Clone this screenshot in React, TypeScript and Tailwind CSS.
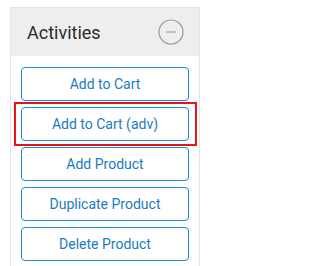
const ACTIONS = ["Add to Cart", "Add to Cart (adv)", "Add Product", "Duplicate Product", "Delete Product"]

export default function App() {
  return (
    <div className="h-[266px] w-[206px] overflow-hidden bg-white pt-[7px] pl-[10px] font-['Roboto',sans-serif]">
      <div className="h-[300px] w-[190px] border border-b-0 border-[#e4e4e4]">
        <div className="flex h-[48px] items-center justify-between bg-[#eeeeee] pl-[16px] pr-[15px]">
          <span className="text-[18px] text-[#2b2b2b]">Activities</span>
          <svg width="26" height="26" viewBox="0 0 26 26">
            <circle cx="13" cy="13" r="12" fill="none" stroke="#9a9a9a" strokeWidth="1.2" />
            <line x1="8" y1="13" x2="18" y2="13" stroke="#b0b0b0" strokeWidth="1.5" />
          </svg>
        </div>
        <div className="flex flex-col gap-[6px] px-[10px] pt-[11px]">
          {ACTIONS.map((label, i) => (
            <div key={label} className="relative">
              {i === 1 && (
                <div className="absolute -top-[5px] -bottom-[5px] -left-[7px] -right-[8px] border-2 border-[#e8141b]" />
              )}
              <button className="relative flex h-[34px] w-full items-center justify-center rounded-[4px] border border-[#1c8ccc] bg-white text-[14px] text-[#1a7cc0]">
                {label}
              </button>
            </div>
          ))}
        </div>
      </div>
    </div>
  )
}
